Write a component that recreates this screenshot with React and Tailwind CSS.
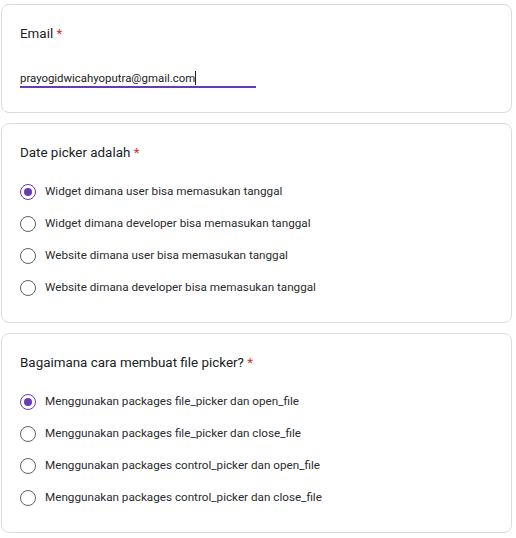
import React from 'react'

const QUESTIONS = [
  {
    title: 'Date picker adalah',
    options: [
      'Widget dimana user bisa memasukan tanggal',
      'Widget dimana developer bisa memasukan tanggal',
      'Website dimana user bisa memasukan tanggal',
      'Website dimana developer bisa memasukan tanggal',
    ],
    selected: 0,
  },
  {
    title: 'Bagaimana cara membuat file picker?',
    options: [
      'Menggunakan packages file_picker dan open_file',
      'Menggunakan packages file_picker dan close_file',
      'Menggunakan packages control_picker dan open_file',
      'Menggunakan packages control_picker dan close_file',
    ],
    selected: 0,
  },
]

function Radio({ checked }) {
  return (
    <span
      className={
        checked
          ? 'w-[16px] h-[16px] rounded-full border-[1.5px] border-[#673ab7] flex items-center justify-center shrink-0'
          : 'w-[16px] h-[16px] rounded-full border-[1.5px] border-[#5f6368] flex items-center justify-center shrink-0'
      }
    >
      {checked && <span className="w-[8px] h-[8px] rounded-full bg-[#673ab7]" />}
    </span>
  )
}

function Title({ children }) {
  return (
    <div className="text-[13.4px] leading-5 text-[#202124]">
      {children} <span className="text-[#d93025]">*</span>
    </div>
  )
}

export default function App() {
  return (
    <div
      className="w-[516px] h-[538px] bg-white pt-[4px] pl-[1px] pr-[4px] flex flex-col gap-[10px]"
      style={{ fontFamily: 'Roboto, "Liberation Sans", sans-serif' }}
    >
      <div className="rounded-lg border border-[#dadce0] bg-white px-[18px] pt-[19px] pb-[24px]">
        <Title>Email</Title>
        <div className="mt-[26px] w-[236px] border-b-2 border-[#673ab7] text-[11.4px] leading-4 text-[#202124] flex items-center">
          <span>prayogidwicahyoputra@gmail.com</span>
          <span className="w-px h-[14px] bg-[#202124]" />
        </div>
      </div>

      {QUESTIONS.map((q) => (
        <div key={q.title} className="rounded-lg border border-[#dadce0] bg-white px-[18px] pt-[19px] pb-[18px]">
          <Title>{q.title}</Title>
          <div className="mt-[13px] flex flex-col">
            {q.options.map((opt, i) => (
              <div key={opt} className="h-[32px] flex items-center gap-[9px]">
                <Radio checked={i === q.selected} />
                <span className="text-[11.7px] text-[#2b2c2f]">{opt}</span>
              </div>
            ))}
          </div>
        </div>
      ))}
    </div>
  )
}
